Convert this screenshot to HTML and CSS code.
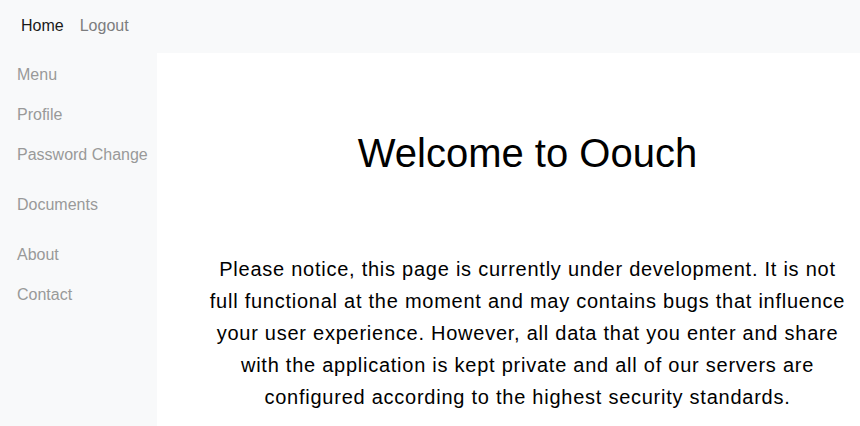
FILE: index.html
```html
<!DOCTYPE html>
<html>
<head>
<meta charset="utf-8">
<link rel="stylesheet" href="styles.css">
</head>
<body>
<header class="topbar">
  <a class="nav-link active" href="#">Home</a>
  <a class="nav-link" href="#">Logout</a>
</header>
<div class="layout">
  <aside class="sidebar">
    <a class="side-link" href="#">Menu</a>
    <a class="side-link" href="#">Profile</a>
    <a class="side-link" href="#">Password Change</a>
    <a class="side-link gap" href="#">Documents</a>
    <a class="side-link gap" href="#">About</a>
    <a class="side-link" href="#">Contact</a>
  </aside>
  <main class="main">
    <h1 class="title">Welcome to Oouch</h1>
    <p class="notice">Please notice, this page is currently under development. It is not full functional at the moment and may contains bugs that influence your user experience. However, all data that you enter and share with the application is kept private and all of our servers are configured according to the highest security standards.</p>
  </main>
</div>
</body>
</html>
```
FILE: styles.css
```css
* { box-sizing: border-box; }
html, body {
  margin: 0;
  padding: 0;
  height: 100%;
}
body {
  font-family: "Liberation Sans", Arial, sans-serif;
  font-size: 16px;
  line-height: 1.5;
  color: #000;
  background: #fff;
  display: flex;
  flex-direction: column;
  overflow: hidden;
}
a { text-decoration: none; }
.topbar {
  height: 53px;
  flex: 0 0 53px;
  background: #f8f9fa;
  display: flex;
  align-items: center;
  padding-left: 13px;
  padding-bottom: 2px;
}
.nav-link {
  padding: 0 8px;
  color: #7c7d7e;
}
.nav-link.active { color: #1a1a1a; }
.layout {
  flex: 1;
  display: flex;
}
.sidebar {
  width: 157px;
  flex: 0 0 157px;
  background: #f8f9fa;
  display: flex;
  flex-direction: column;
  padding-top: 2px;
}
.side-link {
  padding: 8px 0 8px 17px;
  color: #999;
  white-space: nowrap;
}
.side-link.gap { margin-top: 10px; }
.main {
  flex: 1;
  padding-left: 38px;
  text-align: center;
}
.title {
  margin: 76px 0 0;
  font-size: 40px;
  font-weight: 400;
  line-height: 48px;
}
.notice {
  max-width: 645px;
  margin: 76px auto 0;
  font-size: 20px;
  line-height: 32px;
  letter-spacing: 0.75px;
}
```
